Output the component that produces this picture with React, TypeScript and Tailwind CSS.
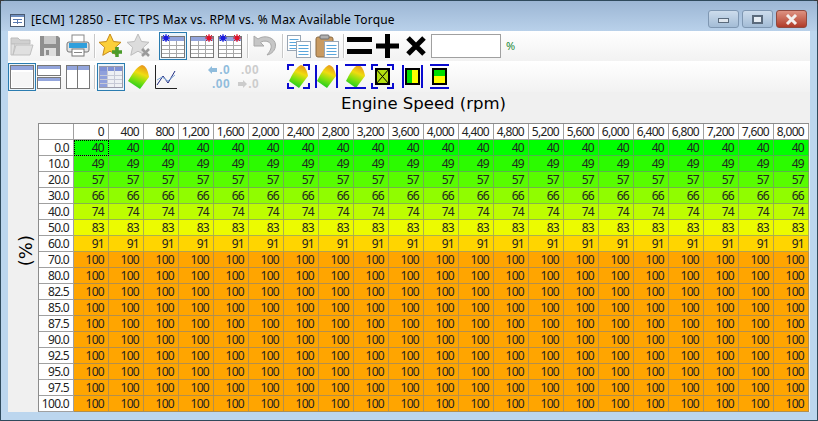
import React, { useId } from "react";

const speeds = ["0", "400", "800", "1,200", "1,600", "2,000", "2,400", "2,800", "3,200", "3,600", "4,000", "4,400", "4,800", "5,200", "5,600", "6,000", "6,400", "6,800", "7,200", "7,600", "8,000"];

const rows: { label: string; value: number; color: string }[] = [
  { label: "0.0", value: 40, color: "bg-[#00ff00]" },
  { label: "10.0", value: 49, color: "bg-[#2cfb00]" },
  { label: "20.0", value: 57, color: "bg-[#58fd00]" },
  { label: "30.0", value: 66, color: "bg-[#90fd00]" },
  { label: "40.0", value: 74, color: "bg-[#bdfd00]" },
  { label: "50.0", value: 83, color: "bg-[#ecfb00]" },
  { label: "60.0", value: 91, color: "bg-[#ffd500]" },
  ...["70.0", "80.0", "82.5", "85.0", "87.5", "90.0", "92.5", "95.0", "97.5", "100.0"].map((label) => ({
    label,
    value: 100,
    color: "bg-[#ffa500]",
  })),
];

const Sep = ({ ml }: { ml: string }) => <div className={`h-[24px] w-[2px] border-l border-[#c8c8c8] bg-white ${ml}`} />;

const Folder = () => (
  <svg width="24" height="24" viewBox="0 0 24 24">
    <path d="M1 4h7l2 2h10v4H1z" fill="#d0d0d0" stroke="#bcbcbc" />
    <path d="M1 21V10h4L3 21z M3 21l3-10h17l-3 10z" fill="#e0e0e0" stroke="#c0c0c0" />
  </svg>
);

const Save = () => (
  <svg width="20" height="20" viewBox="0 0 20 20">
    <path d="M0 0h18l2 2v18H0z" fill="#8f8f8f" />
    <rect x="4" y="0" width="12" height="8" fill="#c8c8c8" />
    <rect x="4" y="12" width="12" height="8" fill="#dedede" />
    <rect x="6" y="14" width="3" height="5" fill="#8f8f8f" />
  </svg>
);

const Printer = () => (
  <svg width="24" height="24" viewBox="0 0 24 24">
    <rect x="6" y="1" width="12" height="8" fill="#fff" stroke="#888" />
    <rect x="1" y="8" width="22" height="10" rx="2" fill="#e4e4e4" stroke="#777" />
    <rect x="3" y="9" width="18" height="5" fill="#2f9fdc" />
    <rect x="6" y="15" width="12" height="7" fill="#fff" stroke="#777" />
    <rect x="8" y="18" width="8" height="1" fill="#888" />
  </svg>
);

const Star = ({ gray }: { gray?: boolean }) => (
  <svg width="24" height="24" viewBox="0 0 24 24">
    <path
      d="M11 0l3.500 7.500 7.500.8-5.600 5 1.800 8L11 17.200 3.800 21.300l1.800-8L0 8.300l7.500-.8z"
      fill={gray ? "#dcdcdc" : "#fbcf3a"}
      stroke={gray ? "#bdbdbd" : "#c68a1a"}
    />
    {gray ? (
      <path d="M15 15l7 7M22 15l-7 7" stroke="#9a9a9a" strokeWidth="2.500" />
    ) : (
      <path d="M18 13v10M13 18h10" stroke="#4b9b2a" strokeWidth="3.500" />
    )}
  </svg>
);

const Gear = ({ x, color }: { x: number; color: string }) => (
  <g>
    <circle cx={x} cy="4" r="2.500" fill={color} />
    <path d={`M${x - 4} 4h8M${x} 0v8M${x - 3} 1l6 6M${x + 3} 1l-6 6`} stroke={color} strokeWidth="1" />
  </g>
);

const GridIcon = ({ blue, red }: { blue?: boolean; red?: boolean }) => (
  <svg width="24" height="24" viewBox="0 0 24 24">
    <rect x="0.500" y="2.500" width="23" height="21" fill="#fff" stroke="#777" />
    <rect x="1" y="3" width="22" height="4" fill="#93a5dc" />
    <path d="M1 11.500h22M1 15.500h22M1 19.500h22M8.500 7v16M15.500 7v16" stroke="#a8a8a8" />
    {blue && <Gear x={5} color="#1a1ae0" />}
    {red && <Gear x={19} color="#e0142c" />}
  </svg>
);

const Undo = () => (
  <svg width="24" height="24" viewBox="0 0 24 24">
    <path d="M1 2v10h10L7.500 8.500C11 6 17 7 18 11c.8 3.500-1.500 7-4 10 5-1 8.500-5 8.500-10C22.500 4 12 0 5 5z" fill="#c6c6c6" stroke="#a8a8a8" />
  </svg>
);

const Doc = ({ x, y, w, h }: { x: number; y: number; w: number; h: number }) => (
  <g>
    <rect x={x} y={y} width={w} height={h} fill="#fff" stroke="#9aa6b4" />
    <path d={`M${x + 2} ${y + 4}h${w - 4}M${x + 2} ${y + 7}h${w - 4}M${x + 2} ${y + 10}h${w - 4}M${x + 2} ${y + 13}h${w - 4}`} stroke="#5aa6dc" />
  </g>
);

const Copy = () => (
  <svg width="24" height="24" viewBox="0 0 24 24">
    <Doc x={0.500} y={1.500} w={13} h={15} />
    <Doc x={9.500} y={7.500} w={14} h={16} />
  </svg>
);

const Paste = () => (
  <svg width="24" height="24" viewBox="0 0 24 24">
    <rect x="1" y="3" width="17" height="20" rx="2" fill="#c99b62" stroke="#8a6a42" />
    <rect x="5" y="1" width="9" height="4" rx="1" fill="#b0b0b0" stroke="#707070" />
    <Doc x={9.500} y={7.500} w={14} h={16} />
  </svg>
);

const WinA = () => (
  <svg width="24" height="24" viewBox="0 0 24 24">
    <rect x="0.500" y="0.500" width="23" height="23" fill="#fff" stroke="#777" />
    <rect x="1" y="1" width="22" height="4" fill="#93a5dc" />
    <rect x="2" y="7" width="20" height="15" fill="#f6f6f6" />
  </svg>
);

const WinB = () => (
  <svg width="24" height="24" viewBox="0 0 24 24">
    <rect x="0.500" y="0.500" width="23" height="10" fill="#fff" stroke="#777" />
    <rect x="0.500" y="12.500" width="23" height="11" fill="#fff" stroke="#777" />
    <rect x="1" y="1" width="22" height="3" fill="#93a5dc" />
    <rect x="1" y="13" width="22" height="3" fill="#93a5dc" />
  </svg>
);

const WinC = () => (
  <svg width="24" height="24" viewBox="0 0 24 24">
    <rect x="0.500" y="0.500" width="23" height="23" fill="#fff" stroke="#777" />
    <rect x="1" y="1" width="22" height="4" fill="#93a5dc" />
    <path d="M11.500 0v24" stroke="#777" />
  </svg>
);

const TableIcon = () => (
  <svg width="24" height="22" viewBox="0 0 24 22">
    <rect x="0.500" y="0.500" width="23" height="21" fill="#eef0f4" stroke="#9a9aaa" />
    <rect x="1" y="1" width="22" height="4" fill="#7f92d6" />
    <rect x="1" y="5" width="7" height="16" fill="#8fa0dc" />
    <path d="M1 9.500h22M1 13.500h22M1 17.500h22M8.500 1v20M15.500 1v20" stroke="#c6c9d6" />
  </svg>
);

const Surface = () => {
  const id = useId();
  return (
    <svg width="22" height="24" viewBox="0 0 22 24">
      <defs>
        <linearGradient id={id} x1="0.700" y1="0" x2="0.350" y2="1">
          <stop offset="0" stopColor="#e8941c" />
          <stop offset="0.350" stopColor="#f0dc10" />
          <stop offset="0.650" stopColor="#7fe010" />
          <stop offset="1" stopColor="#10c820" />
        </linearGradient>
      </defs>
      <path d="M14 0c4 1 6 5 7 12L12 24 0 16C4 10 8 2 14 0z" fill={`url(#${id})`} />
    </svg>
  );
};

const LineChart = () => (
  <svg width="22" height="24" viewBox="0 0 22 24">
    <path d="M0.500 0v23.500H22" fill="none" stroke="#222" />
    <path d="M2 20l6-9 5 7 7-12" fill="none" stroke="#202a80" />
    <path d="M2 15l5-3 6 4 7-6" fill="none" stroke="#7fa8d8" />
  </svg>
);

const Arrow = ({ dir, color, className }: { dir: "left" | "right"; color: string; className: string }) => (
  <svg className={`shrink-0 ${className}`} width="9" height="8" viewBox="0 0 9 8">
    <path d={dir === "left" ? "M0 4l4-4v2h5v4H4v2z" : "M9 4L5 0v2H0v4h5v2z"} fill={color} />
  </svg>
);

const Decimals = ({ more }: { more?: boolean }) => (
  <div className={`flex font-["Liberation_Sans",sans-serif] text-[12px] font-bold leading-[14px] tracking-[0.5px] ${more ? "w-[22px] text-[#90bcdc]" : "w-[21px] text-[#cccccc]"}`}>
    {more && <Arrow dir="left" color="#90bcdc" className="mt-[3px]" />}
    {!more && <Arrow dir="right" color="#cccccc" className="mt-[17px]" />}
    <div className={`flex-1 text-right ${more ? "-ml-[5px]" : "-ml-[6px]"}`}>
      {more ? ".0" : ".00"}
      <br />
      {more ? ".00" : ".0"}
    </div>
  </div>
);

const Brackets = ({ mode }: { mode: "all" | "sides" | "ends" }) => (
  <>
    {mode === "all" && (
      <path d="M1 6V1h6M16 1h6v5M1 19v5h6M16 24h6v-5" fill="none" stroke="#0a0ad0" strokeWidth="2" />
    )}
    {mode === "sides" && <path d="M1 1v23M22 1v23" stroke="#0a0ad0" strokeWidth="2" />}
    {mode === "ends" && <path d="M1 1h21M1 24h21" stroke="#0a0ad0" strokeWidth="2" />}
  </>
);

const SurfaceBox = ({ mode }: { mode: "all" | "sides" | "ends" }) => {
  const id = useId();
  return (
    <svg width="23" height="25" viewBox="0 0 23 25">
      <defs>
        <linearGradient id={id} x1="0.700" y1="0" x2="0.350" y2="1">
          <stop offset="0" stopColor="#e8941c" />
          <stop offset="0.350" stopColor="#f0dc10" />
          <stop offset="0.650" stopColor="#7fe010" />
          <stop offset="1" stopColor="#10c820" />
        </linearGradient>
      </defs>
      <path d="M14 1c4 1 6 5 7 11l-9 12-10-7C5 11 9 3 14 1z" fill={`url(#${id})`} />
      <Brackets mode={mode} />
    </svg>
  );
};

const FillBox = () => (
  <svg width="23" height="25" viewBox="0 0 23 25">
    <Brackets mode="all" />
    <rect x="5" y="5" width="13" height="15" fill="#b4e010" stroke="#000" strokeWidth="2" />
    <path d="M5 5l13 15M18 5L5 20" stroke="#000" />
  </svg>
);

const ColumnBox = () => (
  <svg width="21" height="25" viewBox="0 0 21 25">
    <path d="M1 1v23M20 1v23" stroke="#0a0ad0" strokeWidth="2" />
    <rect x="4" y="5" width="13" height="15" fill="#00e000" stroke="#000" strokeWidth="2" />
    <rect x="10" y="6" width="6" height="13" fill="#ffff00" />
  </svg>
);

const RowBox = () => (
  <svg width="21" height="25" viewBox="0 0 21 25">
    <path d="M1 1h19M1 24h19" stroke="#0a0ad0" strokeWidth="2" />
    <rect x="4" y="5" width="13" height="15" fill="#00e000" stroke="#000" strokeWidth="2" />
    <rect x="5" y="12" width="11" height="7" fill="#ffff00" />
  </svg>
);

const Selected = ({ ml, children }: { ml: string; children: React.ReactNode }) => (
  <div className={`flex h-[28px] w-[28px] items-center justify-center border border-[#2a7cb0] bg-[#eaf4fb] ${ml}`}>{children}</div>
);

export default function App() {
  return (
    <div className="h-[421px] w-[818px] overflow-hidden bg-[#3a3a3a]">
      <div className="flex h-[421px] w-[818px] flex-col rounded-t-[6px] border border-[#2f4a5c] bg-[#bcd6ee] px-[7px] pb-[8px]">
        {/* Title bar */}
        <div className="-mx-[7px] flex h-[30px] shrink-0 items-start bg-gradient-to-b from-[#9cb6d4] to-[#b9d1ea] pl-[9px] pr-[10px] font-['Noto_Sans',sans-serif] text-[12px] tracking-[0.17px] text-black">
          <svg className="mt-[13px]" width="15" height="13" viewBox="0 0 15 13">
            <rect x="0.500" y="0.500" width="14" height="12" fill="#fff" stroke="#4a5a70" />
            <rect x="1" y="1" width="13" height="2" fill="#6f8fc0" />
            <path d="M3 5.500h9M3 8.500h9M7.500 5v5" stroke="#5a7ab0" />
          </svg>
          <span className="ml-[6px] mt-[10px] leading-[17px]">[ECM] 12850 - ETC TPS Max vs. RPM vs. % Max Available Torque</span>
          <div className="ml-auto mt-[9px] flex gap-[3px]">
            <div className="flex h-[18px] w-[31px] items-center justify-center rounded-[3px] border border-[#7f97b2] bg-gradient-to-b from-[#cddcec] to-[#a3bcd6]">
              <div className="mt-[3px] h-[5px] w-[11px] border border-[#5a6a7c] bg-[#dfe6ee]" />
            </div>
            <div className="flex h-[18px] w-[31px] items-center justify-center rounded-[3px] border border-[#7f97b2] bg-gradient-to-b from-[#cddcec] to-[#a3bcd6]">
              <div className="h-[9px] w-[11px] border-2 border-[#5a6a7c] bg-[#e6edf4]" />
            </div>
            <div className="flex h-[18px] w-[31px] items-center justify-center rounded-[3px] border border-[#8f4a40] bg-gradient-to-b from-[#dd9282] to-[#b03a28]">
              <svg width="13" height="11" viewBox="0 0 13 11">
                <path d="M2 1l9 9M11 1l-9 9" stroke="#f4f0ee" strokeWidth="3" />
              </svg>
            </div>
          </div>
        </div>

        {/* Client area */}
        <div className="flex min-h-0 flex-1 flex-col rounded-tr-[2px] bg-[#f0f0f0]">
          <div className="flex h-[30px] shrink-0 items-center bg-gradient-to-b from-white to-[#f2f2f2]">
            <div className="ml-[2px]"><Folder /></div>
            <div className="ml-[6px]"><Save /></div>
            <div className="ml-[6px]"><Printer /></div>
            <Sep ml="ml-[4px]" />
            <div className="ml-[3px]"><Star /></div>
            <div className="ml-[4px]"><Star gray /></div>
            <Selected ml="ml-[8px]"><GridIcon blue /></Selected>
            <div className="ml-[3px]"><GridIcon red /></div>
            <div className="ml-[4px]"><GridIcon blue red /></div>
            <Sep ml="ml-[5px]" />
            <div className="ml-[4px]"><Undo /></div>
            <Sep ml="ml-[5px]" />
            <div className="ml-[3px]"><Copy /></div>
            <div className="ml-[4px]"><Paste /></div>
            <Sep ml="ml-[4px]" />
            <svg className="ml-[2px]" width="25" height="18" viewBox="0 0 25 18">
              <path d="M0 2.500h25M0 14.500h25" stroke="#000" strokeWidth="5" />
            </svg>
            <svg className="ml-[4px]" width="23" height="24" viewBox="0 0 23 24">
              <path d="M0 12h23M11.500 0v24" stroke="#000" strokeWidth="5" />
            </svg>
            <svg className="ml-[7px]" width="20" height="20" viewBox="0 0 20 20">
              <path d="M2 2l16 16M18 2L2 18" stroke="#000" strokeWidth="5" />
            </svg>
            <div className="ml-[5px] h-[24px] w-[70px] border border-[#a0a0a0] bg-white" />
            <span className="ml-[5px] font-['Noto_Sans',sans-serif] text-[11px] text-[#1e8a3a]">%</span>
          </div>

          <div className="flex h-[31px] shrink-0 items-center bg-gradient-to-b from-white to-[#f2f2f2]">
            <Selected ml="ml-0"><WinA /></Selected>
            <div className="ml-[1px]"><WinB /></div>
            <div className="ml-[5px]"><WinC /></div>
            <Sep ml="ml-[4px]" />
            <Selected ml="ml-[1px]"><TableIcon /></Selected>
            <div className="ml-[3px]"><Surface /></div>
            <div className="ml-[5px]"><LineChart /></div>
            <div className="ml-[31px]"><Decimals more /></div>
            <div className="ml-[8px]"><Decimals /></div>
            <div className="ml-[28px]"><SurfaceBox mode="all" /></div>
            <div className="ml-[5px]"><SurfaceBox mode="sides" /></div>
            <div className="ml-[6px]"><SurfaceBox mode="ends" /></div>
            <div className="ml-[4px]"><FillBox /></div>
            <div className="ml-[8px]"><ColumnBox /></div>
            <div className="ml-[6px]"><RowBox /></div>
          </div>

          {/* Plot */}
          <div className="flex min-h-0 flex-1">
            <div className="flex w-[30px] shrink-0 items-center justify-center pb-[3px] pl-[6px]">
              <span className="rotate-180 font-['DejaVu_Sans',sans-serif] text-[18px] leading-none text-black [writing-mode:vertical-rl]">(%)</span>
            </div>
            <div className="flex flex-col">
              <div className="flex h-[31px] items-center justify-center pb-[6px] font-['DejaVu_Sans',sans-serif] text-[16.500px] text-black">Engine Speed (rpm)</div>
              <div className="grid grid-cols-[repeat(22,35px)] auto-rows-[16px] border-l border-t border-[#8c8c8c] font-['Noto_Sans',sans-serif] text-[12px] leading-[15px] tracking-[-0.7px] text-[#222]">
                <div className="border-b border-r border-[#a0a0a0] bg-white" />
                {speeds.map((s) => (
                  <div key={s} className="border-b border-r border-[#a0a0a0] bg-white pr-[4px] text-right">{s}</div>
                ))}
                {rows.map((r, ri) => (
                  <React.Fragment key={r.label}>
                    <div className="border-b border-r border-[#a0a0a0] bg-white pr-[4px] text-right">{r.label}</div>
                    {speeds.map((s, ci) => (
                      <div key={s} className={`border-b border-r border-[#80808099] pr-[4px] text-right ${r.color} ${ri === 0 && ci === 0 ? "outline-1 -outline-offset-1 outline-dotted outline-black" : ""}`}>
                        {r.value}
                      </div>
                    ))}
                  </React.Fragment>
                ))}
              </div>
            </div>
          </div>
        </div>
      </div>
    </div>
  );
}
